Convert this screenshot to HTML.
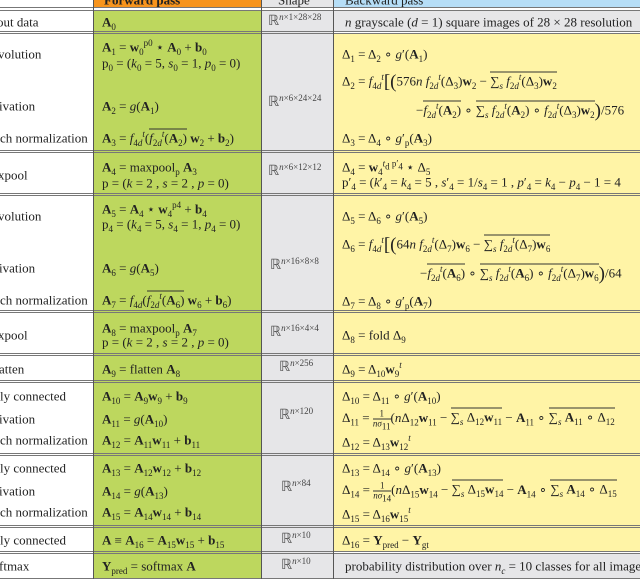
<!DOCTYPE html>
<html><head><meta charset="utf-8"><style>
*{margin:0;padding:0;box-sizing:border-box}
body{width:640px;height:579px;overflow:hidden;background:#fff;position:relative;font-family:"Liberation Serif",serif;font-size:13px;color:#222}
.b{position:absolute}
.t{position:absolute;white-space:nowrap;line-height:1;transform:translateY(-50%)}
.h{position:absolute;left:0;width:640px;height:1px;background:#777}
.v{position:absolute;width:1px;background:#555}
b{font-weight:bold}
sub,sup{font-size:9px;line-height:0}
.o{border-top:1px solid #333;padding-top:1px}
.sm{font-size:9px;color:#444;vertical-align:5px}
.R{font-size:14px}
.big{font-size:19px;vertical-align:-2px}
.fr{display:inline-block;vertical-align:middle;text-align:center;font-size:9px;line-height:1}
.fr span{display:block}
.fr span:first-child{border-bottom:1px solid #333}
</style></head><body>
<div class="b" style="left:94px;top:0;width:167px;height:8px;background:#f7941d"></div>
<div class="b" style="left:262px;top:0;width:71px;height:8px;background:#e6e6e8"></div>
<div class="b" style="left:334px;top:0;width:306px;height:8px;background:#b6def7"></div>
<div class="b" style="left:94px;top:11px;width:167px;height:568px;background:#bdd75e"></div>
<div class="b" style="left:262px;top:11px;width:71px;height:568px;background:#e6e6e8"></div>
<div class="b" style="left:334px;top:11px;width:306px;height:20px;background:#e6e6e8"></div>
<div class="b" style="left:334px;top:33px;width:306px;height:519px;background:#fff4a6"></div>
<div class="b" style="left:334px;top:554px;width:306px;height:25px;background:#e6e6e8"></div>
<div class="h" style="top:7px"></div><div class="h" style="top:10px"></div>
<div class="h" style="top:31px"></div><div class="h" style="top:33px"></div>
<div class="h" style="top:150px"></div><div class="h" style="top:152px"></div>
<div class="h" style="top:193px"></div><div class="h" style="top:195px"></div>
<div class="h" style="top:310px"></div><div class="h" style="top:312px"></div>
<div class="h" style="top:353px"></div><div class="h" style="top:355px"></div>
<div class="h" style="top:380px"></div><div class="h" style="top:382px"></div>
<div class="h" style="top:453px"></div><div class="h" style="top:455px"></div>
<div class="h" style="top:525px"></div><div class="h" style="top:527px"></div>
<div class="h" style="top:551px"></div><div class="h" style="top:553px"></div>
<div class="h" style="top:578px"></div>
<div class="v" style="left:93px;top:0;height:579px"></div>
<div class="v" style="left:261px;top:0;height:579px"></div>
<div class="v" style="left:333px;top:0;height:579px"></div>

<div class="t" style="left:104px;top:0px;font-weight:bold">Forward pass</div>
<div class="t" style="left:278px;top:0px">Shape</div>
<div class="t" style="left:345px;top:0px">Backward pass</div>

<div class="t" style="left:-3px;top:22px">out data</div>
<div class="t" style="left:-2px;top:54px">volution</div>
<div class="t" style="left:-1px;top:106px">ivation</div>
<div class="t" style="left:0;top:138px">ch normalization</div>
<div class="t" style="left:-2px;top:175px">xpool</div>
<div class="t" style="left:-2px;top:216px">volution</div>
<div class="t" style="left:-1px;top:268px">ivation</div>
<div class="t" style="left:0;top:300px">ch normalization</div>
<div class="t" style="left:-2px;top:335px">xpool</div>
<div class="t" style="left:-1px;top:369px">atten</div>
<div class="t" style="left:0;top:396px">ly connected</div>
<div class="t" style="left:-1px;top:419px">ivation</div>
<div class="t" style="left:0;top:440px">ch normalization</div>
<div class="t" style="left:0;top:468px">ly connected</div>
<div class="t" style="left:-1px;top:491px">ivation</div>
<div class="t" style="left:0;top:512px">ch normalization</div>
<div class="t" style="left:0;top:540px">ly connected</div>
<div class="t" style="left:-1px;top:566px">ftmax</div>

<div class="t" style="left:102px;top:22px"><b>A</b><sub>0</sub></div>
<div class="t" style="left:102px;top:47px"><b>A</b><sub>1</sub> = <b>w</b><sub>0</sub><sup>p0</sup> ⋆ <b>A</b><sub>0</sub> + <b>b</b><sub>0</sub></div>
<div class="t" style="left:102px;top:63px">p<sub>0</sub> = (<i>k</i><sub>0</sub> = 5, <i>s</i><sub>0</sub> = 1, <i>p</i><sub>0</sub> = 0)</div>
<div class="t" style="left:102px;top:106px"><b>A</b><sub>2</sub> = <i>g</i>(<b>A</b><sub>1</sub>)</div>
<div class="t" style="left:102px;top:138px"><b>A</b><sub>3</sub> = <i>f</i><sub>4<i>d</i></sub><sup><i>t</i></sup>(<span class="o"><i>f</i><sub>2<i>d</i></sub><sup><i>t</i></sup>(<b>A</b><sub>2</sub>)</span> <b>w</b><sub>2</sub> + <b>b</b><sub>2</sub>)</div>
<div class="t" style="left:102px;top:167px"><b>A</b><sub>4</sub> = maxpool<sub>p</sub> <b>A</b><sub>3</sub></div>
<div class="t" style="left:102px;top:183px">p = (<i>k</i> = 2 , <i>s</i> = 2 , <i>p</i> = 0)</div>
<div class="t" style="left:102px;top:209px"><b>A</b><sub>5</sub> = <b>A</b><sub>4</sub> ⋆ <b>w</b><sub>4</sub><sup>p4</sup> + <b>b</b><sub>4</sub></div>
<div class="t" style="left:102px;top:224px">p<sub>4</sub> = (<i>k</i><sub>4</sub> = 5, <i>s</i><sub>4</sub> = 1, <i>p</i><sub>4</sub> = 0)</div>
<div class="t" style="left:102px;top:268px"><b>A</b><sub>6</sub> = <i>g</i>(<b>A</b><sub>5</sub>)</div>
<div class="t" style="left:102px;top:300px"><b>A</b><sub>7</sub> = <i>f</i><sub>4<i>d</i></sub>(<span class="o"><i>f</i><sub>2<i>d</i></sub><sup><i>t</i></sup>(<b>A</b><sub>6</sub>)</span> <b>w</b><sub>6</sub> + <b>b</b><sub>6</sub>)</div>
<div class="t" style="left:102px;top:328px"><b>A</b><sub>8</sub> = maxpool<sub>p</sub> <b>A</b><sub>7</sub></div>
<div class="t" style="left:102px;top:342px">p = (<i>k</i> = 2 , <i>s</i> = 2 , <i>p</i> = 0)</div>
<div class="t" style="left:102px;top:369px"><b>A</b><sub>9</sub> = flatten <b>A</b><sub>8</sub></div>
<div class="t" style="left:102px;top:396px"><b>A</b><sub>10</sub> = <b>A</b><sub>9</sub><b>w</b><sub>9</sub> + <b>b</b><sub>9</sub></div>
<div class="t" style="left:102px;top:419px"><b>A</b><sub>11</sub> = <i>g</i>(<b>A</b><sub>10</sub>)</div>
<div class="t" style="left:102px;top:440px"><b>A</b><sub>12</sub> = <b>A</b><sub>11</sub><b>w</b><sub>11</sub> + <b>b</b><sub>11</sub></div>
<div class="t" style="left:102px;top:468px"><b>A</b><sub>13</sub> = <b>A</b><sub>12</sub><b>w</b><sub>12</sub> + <b>b</b><sub>12</sub></div>
<div class="t" style="left:102px;top:491px"><b>A</b><sub>14</sub> = <i>g</i>(<b>A</b><sub>13</sub>)</div>
<div class="t" style="left:102px;top:512px"><b>A</b><sub>15</sub> = <b>A</b><sub>14</sub><b>w</b><sub>14</sub> + <b>b</b><sub>14</sub></div>
<div class="t" style="left:102px;top:540px"><b>A</b> ≡ <b>A</b><sub>16</sub> = <b>A</b><sub>15</sub><b>w</b><sub>15</sub> + <b>b</b><sub>15</sub></div>
<div class="t" style="left:102px;top:566px"><b>Y</b><sub>pred</sub> = softmax <b>A</b></div>

<div class="t" style="left:268px;top:21px;color:#555"><span class="R">ℝ</span><span class="sm"><i>n</i>×1×28×28</span></div>
<div class="t" style="left:268px;top:102px;color:#555"><span class="R">ℝ</span><span class="sm"><i>n</i>×6×24×24</span></div>
<div class="t" style="left:268px;top:171px;color:#555"><span class="R">ℝ</span><span class="sm"><i>n</i>×6×12×12</span></div>
<div class="t" style="left:270px;top:265px;color:#555"><span class="R">ℝ</span><span class="sm"><i>n</i>×16×8×8</span></div>
<div class="t" style="left:270px;top:332px;color:#555"><span class="R">ℝ</span><span class="sm"><i>n</i>×16×4×4</span></div>
<div class="t" style="left:279px;top:367px;color:#555"><span class="R">ℝ</span><span class="sm"><i>n</i>×256</span></div>
<div class="t" style="left:279px;top:415px;color:#555"><span class="R">ℝ</span><span class="sm"><i>n</i>×120</span></div>
<div class="t" style="left:281px;top:487px;color:#555"><span class="R">ℝ</span><span class="sm"><i>n</i>×84</span></div>
<div class="t" style="left:281px;top:539px;color:#555"><span class="R">ℝ</span><span class="sm"><i>n</i>×10</span></div>
<div class="t" style="left:281px;top:565px;color:#555"><span class="R">ℝ</span><span class="sm"><i>n</i>×10</span></div>

<div class="t" style="left:345px;top:22px"><i>n</i> grayscale (<i>d</i> = 1) square images of 28 × 28 resolution</div>
<div class="t" style="left:342px;top:54px">Δ<sub>1</sub> = Δ<sub>2</sub> ∘ <i>g</i>′(<b>A</b><sub>1</sub>)</div>
<div class="t" style="left:342px;top:82px">Δ<sub>2</sub> = <i>f</i><sub>4<i>d</i></sub><sup><i>t</i></sup><span class="big">[(</span>576<i>n</i> <i>f</i><sub>2<i>d</i></sub><sup><i>t</i></sup>(Δ<sub>3</sub>)<b>w</b><sub>2</sub> − <span class="o">∑<sub><i>s</i></sub> <i>f</i><sub>2<i>d</i></sub><sup><i>t</i></sup>(Δ<sub>3</sub>)<b>w</b><sub>2</sub></span></div>
<div class="t" style="left:416px;top:111px">−<span class="o"><i>f</i><sub>2<i>d</i></sub><sup><i>t</i></sup>(<b>A</b><sub>2</sub>)</span> ∘ <span class="o">∑<sub><i>s</i></sub> <i>f</i><sub>2<i>d</i></sub><sup><i>t</i></sup>(<b>A</b><sub>2</sub>) ∘ <i>f</i><sub>2<i>d</i></sub><sup><i>t</i></sup>(Δ<sub>3</sub>)<b>w</b><sub>2</sub></span><span class="big">)</span>/576</div>
<div class="t" style="left:342px;top:138px">Δ<sub>3</sub> = Δ<sub>4</sub> ∘ <i>g</i>′<sub>p</sub>(<b>A</b><sub>3</sub>)</div>
<div class="t" style="left:342px;top:167px">Δ<sub>4</sub> = <b>w</b><sub>4</sub><sup><i>t</i><sub>d</sub> p′<sub>4</sub></sup> ⋆ Δ<sub>5</sub></div>
<div class="t" style="left:342px;top:182px">p′<sub>4</sub> = (<i>k</i>′<sub>4</sub> = <i>k</i><sub>4</sub> = 5 , <i>s</i>′<sub>4</sub> = 1/<i>s</i><sub>4</sub> = 1 , <i>p</i>′<sub>4</sub> = <i>k</i><sub>4</sub> − <i>p</i><sub>4</sub> − 1 = 4</div>
<div class="t" style="left:342px;top:216px">Δ<sub>5</sub> = Δ<sub>6</sub> ∘ <i>g</i>′(<b>A</b><sub>5</sub>)</div>
<div class="t" style="left:342px;top:245px">Δ<sub>6</sub> = <i>f</i><sub>4<i>d</i></sub><sup><i>t</i></sup><span class="big">[(</span>64<i>n</i> <i>f</i><sub>2<i>d</i></sub><sup><i>t</i></sup>(Δ<sub>7</sub>)<b>w</b><sub>6</sub> − <span class="o">∑<sub><i>s</i></sub> <i>f</i><sub>2<i>d</i></sub><sup><i>t</i></sup>(Δ<sub>7</sub>)<b>w</b><sub>6</sub></span></div>
<div class="t" style="left:420px;top:274px">−<span class="o"><i>f</i><sub>2<i>d</i></sub><sup><i>t</i></sup>(<b>A</b><sub>6</sub>)</span> ∘ <span class="o">∑<sub><i>s</i></sub> <i>f</i><sub>2<i>d</i></sub><sup><i>t</i></sup>(<b>A</b><sub>6</sub>) ∘ <i>f</i><sub>2<i>d</i></sub><sup><i>t</i></sup>(Δ<sub>7</sub>)<b>w</b><sub>6</sub></span><span class="big">)</span>/64</div>
<div class="t" style="left:342px;top:301px">Δ<sub>7</sub> = Δ<sub>8</sub> ∘ <i>g</i>′<sub>p</sub>(<b>A</b><sub>7</sub>)</div>
<div class="t" style="left:342px;top:335px">Δ<sub>8</sub> = fold Δ<sub>9</sub></div>
<div class="t" style="left:342px;top:369px">Δ<sub>9</sub> = Δ<sub>10</sub><b>w</b><sub>9</sub><sup><i>t</i></sup></div>
<div class="t" style="left:342px;top:396px">Δ<sub>10</sub> = Δ<sub>11</sub> ∘ <i>g</i>′(<b>A</b><sub>10</sub>)</div>
<div class="t" style="left:342px;top:419px">Δ<sub>11</sub> = <span class="fr"><span>1</span><span><i>nσ</i><sub>11</sub></span></span>(<i>n</i>Δ<sub>12</sub><b>w</b><sub>11</sub> − <span class="o">∑<sub><i>s</i></sub> Δ<sub>12</sub><b>w</b><sub>11</sub></span> − <b>A</b><sub>11</sub> ∘ <span class="o">∑<sub><i>s</i></sub> <b>A</b><sub>11</sub> ∘ Δ<sub>12</sub></span></div>
<div class="t" style="left:342px;top:442px">Δ<sub>12</sub> = Δ<sub>13</sub><b>w</b><sub>12</sub><sup><i>t</i></sup></div>
<div class="t" style="left:342px;top:468px">Δ<sub>13</sub> = Δ<sub>14</sub> ∘ <i>g</i>′(<b>A</b><sub>13</sub>)</div>
<div class="t" style="left:342px;top:491px">Δ<sub>14</sub> = <span class="fr"><span>1</span><span><i>nσ</i><sub>14</sub></span></span>(<i>n</i>Δ<sub>15</sub><b>w</b><sub>14</sub> − <span class="o">∑<sub><i>s</i></sub> Δ<sub>15</sub><b>w</b><sub>14</sub></span> − <b>A</b><sub>14</sub> ∘ <span class="o">∑<sub><i>s</i></sub> <b>A</b><sub>14</sub> ∘ Δ<sub>15</sub></span></div>
<div class="t" style="left:342px;top:514px">Δ<sub>15</sub> = Δ<sub>16</sub><b>w</b><sub>15</sub><sup><i>t</i></sup></div>
<div class="t" style="left:342px;top:540px">Δ<sub>16</sub> = <b>Y</b><sub>pred</sub> − <b>Y</b><sub>gt</sub></div>
<div class="t" style="left:345px;top:566px">probability distribution over <i>n</i><sub><i>c</i></sub> = 10 classes for all images</div>
</body></html>
